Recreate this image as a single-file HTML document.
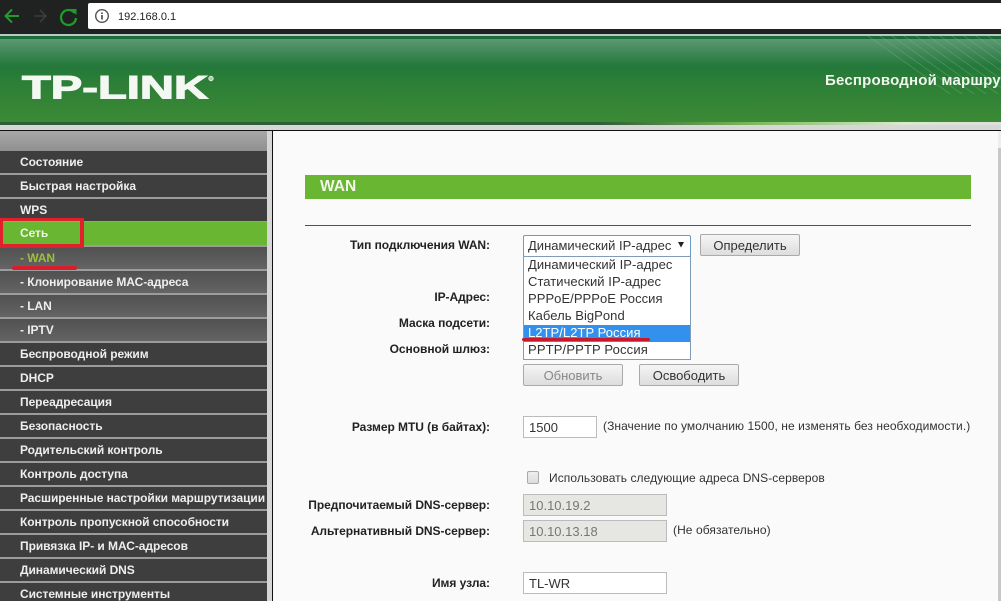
<!DOCTYPE html>
<html><head><meta charset="utf-8"><style>
html,body{margin:0;padding:0;width:1001px;height:601px;overflow:hidden}
#w{left:0;top:0;width:1001px;height:601px;overflow:hidden;background:#fafafa;font-family:"Liberation Sans",sans-serif}
div,span{position:absolute;white-space:nowrap;box-sizing:border-box}
.m{left:0;width:267px;height:22px;background:#3e3e3e;color:#eee;font-weight:bold;font-size:12px;line-height:22px;padding-left:20px;letter-spacing:-.06px}
.s{background:linear-gradient(#515151,#646464)}
.l{right:511px;font-weight:bold;font-size:12px;color:#222;line-height:14px;letter-spacing:-.05px}
.t{font-size:12px;color:#333;line-height:14px;letter-spacing:.07px}
.o{left:525px;font-size:13px;color:#333;line-height:17px;letter-spacing:.05px}
.b{height:23px;border:1px solid #aaa;border-radius:2px;background:linear-gradient(#f5f5f5,#ddd);font-size:13px;color:#333;text-align:center;line-height:21px}
.i{left:523px;height:22px;border:1px solid #bbb;background:#fff;font-size:13px;color:#333;line-height:21px;padding-left:5px}
.d{background:#e6e6e2;color:#777}
</style></head><body><div id="w">
<div style="left:0;top:0;width:1001px;height:34px;background:#1f2221"></div>
<div style="left:88px;top:3px;width:913px;height:26px;background:#fff;border-radius:2px 0 0 2px"></div>
<svg style="position:absolute;left:0;top:0" width="90" height="34" fill="none">
<path d="M19 16H6M12 9.500L5.500 16 12 22.500" stroke="#1f9a2c" stroke-width="2"/>
<path d="M34 16H46M40 10L46 16 40 22" stroke="#3a403c" stroke-width="1.500"/>
<path d="M74.500 13A7.500 7.500 0 1 0 76 18" stroke="#1f9a2c" stroke-width="2.300"/>
<path d="M70.500 9H76.500V15Z" fill="#1f9a2c"/>
</svg>
<svg style="position:absolute;left:94px;top:6px" width="22" height="22" fill="none">
<circle cx="8" cy="10" r="6.300" stroke="#555" stroke-width="1.400"/>
<path d="M8 9V13.500M8 6.500V8" stroke="#444" stroke-width="1.600"/>
</svg>
<div style="left:118px;top:10px;font-size:11px;line-height:14px;color:#222">192.168.0.1</div>

<div style="left:0;top:34px;width:1001px;height:2px;background:#b9c9bf"></div>
<div style="left:0;top:36px;width:1001px;height:3px;background:#1c6b3c"></div>
<div style="left:0;top:39px;width:1001px;height:83px;background:linear-gradient(#5c9a72 0,#4f9065 8%,#23783a 33%,#2b7e37 50%,#3c8a36 100%)"></div>
<svg style="position:absolute;left:860px;top:34px" width="141" height="60" fill="none" stroke="#7fb592" stroke-width=".6" opacity=".5">
<path d="M8 2L90 60M20 2L102 60M32 2L114 60M44 2L126 60M56 2L138 60M68 2L150 60M80 2L162 60M92 2L174 60M104 2L186 60M116 2L198 60M128 2L210 60"/>
</svg>
<svg style="position:absolute;left:0;top:60px" width="240" height="50">
<text x="22" y="38.500" font-family="Liberation Sans" font-weight="bold" font-size="32" fill="#f4f8f2" textLength="186" lengthAdjust="spacingAndGlyphs" stroke="#f4f8f2" stroke-width="1.100">TP-LINK</text>
<circle cx="211" cy="18.500" r="2.200" fill="#a9cba6" stroke="#dfeadb" stroke-width="1"/>
</svg>
<div style="left:825px;top:72px;font-size:15px;font-weight:bold;color:#f0f5ee;line-height:18px;letter-spacing:.2px">Беспроводной маршрутизатор</div>
<div style="left:0;top:122px;width:1001px;height:3px;background:linear-gradient(90deg,#2f5f38 0,#2f5f38 60%,#7ab85a 75%,#d8e8cc 90%,#dedede 100%)"></div>
<div style="left:0;top:125px;width:1001px;height:5px;background:#d6d8d6"></div>
<div style="left:0;top:130px;width:1001px;height:1px;background:#111"></div>

<div style="left:0;top:131px;width:267px;height:470px;background:#9c9c9c"></div>
<div style="left:267px;top:131px;width:5px;height:470px;background:#d6d6d6"></div>
<div style="left:272px;top:130px;width:1px;height:471px;background:#111"></div>
<div style="left:0;top:131px;width:267px;height:20px;background:linear-gradient(#a8a8a8,#909090)"></div>
<div style="left:998px;top:131px;width:3px;height:17px;background:#eee"></div>
<div style="left:998px;top:148px;width:3px;height:453px;background:#c8c8c8"></div>

<div class="m" style="top:151px">Состояние</div>
<div class="m" style="top:175px">Быстрая настройка</div>
<div class="m" style="top:199px">WPS</div>
<div class="m" style="top:222px;height:23px;background:#68b632;color:#eef5e0;line-height:23px">Сеть</div>
<div class="m s" style="top:247px;color:#9cc03c">- WAN</div>
<div class="m s" style="top:271px">- Клонирование МАС-адреса</div>
<div class="m s" style="top:295px">- LAN</div>
<div class="m s" style="top:319px">- IPTV</div>
<div class="m" style="top:343px">Беспроводной режим</div>
<div class="m" style="top:367px">DHCP</div>
<div class="m" style="top:391px">Переадресация</div>
<div class="m" style="top:415px">Безопасность</div>
<div class="m" style="top:439px">Родительский контроль</div>
<div class="m" style="top:463px">Контроль доступа</div>
<div class="m" style="top:487px">Расширенные настройки маршрутизации</div>
<div class="m" style="top:511px">Контроль пропускной способности</div>
<div class="m" style="top:535px">Привязка IP- и МАС-адресов</div>
<div class="m" style="top:559px">Динамический DNS</div>
<div class="m" style="top:583px">Системные инструменты</div>

<div style="left:0;top:218px;width:84px;height:30px;border:3px solid #e0202a;border-right-width:4px;border-bottom-width:4px"></div>
<div style="left:12px;top:266px;width:65px;height:4px;background:#d81e2c;border-radius:2px"></div>

<div style="left:305px;top:175px;width:666px;height:24px;background:#68b632;color:#f2f7ea;font-size:15.500px;font-weight:bold;line-height:23px;padding-left:15px">WAN</div>
<div style="left:305px;top:225px;width:666px;height:1px;background:#1c6b5a"></div>

<div class="l" style="top:238px">Тип подключения WAN:</div>
<div class="l" style="top:290px">IP-Адрес:</div>
<div class="l" style="top:316px">Маска подсети:</div>
<div class="l" style="top:342px">Основной шлюз:</div>
<div class="l" style="top:420px">Размер MTU (в байтах):</div>
<div class="l" style="top:498px">Предпочитаемый DNS-сервер:</div>
<div class="l" style="top:524px">Альтернативный DNS-сервер:</div>
<div class="l" style="top:576px">Имя узла:</div>

<div style="left:523px;top:235px;width:168px;height:22px;border:1px solid #6d9bc8;border-radius:2px;background:#fff;font-size:13px;color:#333;line-height:20px;padding-left:4px">Динамический IP-адрес</div>
<svg style="position:absolute;left:677px;top:241px" width="10" height="8"><path d="M1 1H7L4 6.500Z" fill="#222"/></svg>
<div style="left:523px;top:256px;width:168px;height:104px;border:1px solid #7f9db9;background:#fff"></div>
<div style="left:524px;top:325px;width:166px;height:17px;background:#3291ec"></div>
<div class="o" style="top:256px;left:528px">Динамический IP-адрес</div>
<div class="o" style="top:273px;left:528px">Статический IP-адрес</div>
<div class="o" style="top:290px;left:528px">PPPoE/PPPoE Россия</div>
<div class="o" style="top:307px;left:528px">Кабель BigPond</div>
<div class="o" style="top:324px;left:528px;color:#fff">L2TP/L2TP Россия</div>
<div class="o" style="top:341px;left:528px;letter-spacing:.15px">PPTP/PPTP Россия</div>
<div style="left:522px;top:338px;width:128px;height:3px;background:#c8182c;border-radius:2px"></div>

<div class="b" style="left:700px;top:234px;width:100px;height:22px">Определить</div>
<div class="b" style="left:523px;top:364px;width:100px;height:22px;color:#888;line-height:22px">Обновить</div>
<div class="b" style="left:639px;top:364px;width:100px;height:22px;line-height:22px">Освободить</div>

<div class="i" style="top:416px;width:74px">1500</div>
<div class="t" style="left:603px;top:419px">(Значение по умолчанию 1500, не изменять без необходимости.)</div>

<div style="left:527px;top:471px;width:12px;height:13px;border:1px solid #aaa;border-radius:2px;background:linear-gradient(#eee,#ddd)"></div>
<div class="t" style="left:549px;top:471px">Использовать следующие адреса DNS-серверов</div>

<div class="i d" style="top:494px;width:144px">10.10.19.2</div>
<div class="i d" style="top:520px;width:144px">10.10.13.18</div>
<div class="t" style="left:673px;top:523px">(Не обязательно)</div>
<div class="i" style="top:572px;width:144px">TL-WR</div>
</div></body></html>
